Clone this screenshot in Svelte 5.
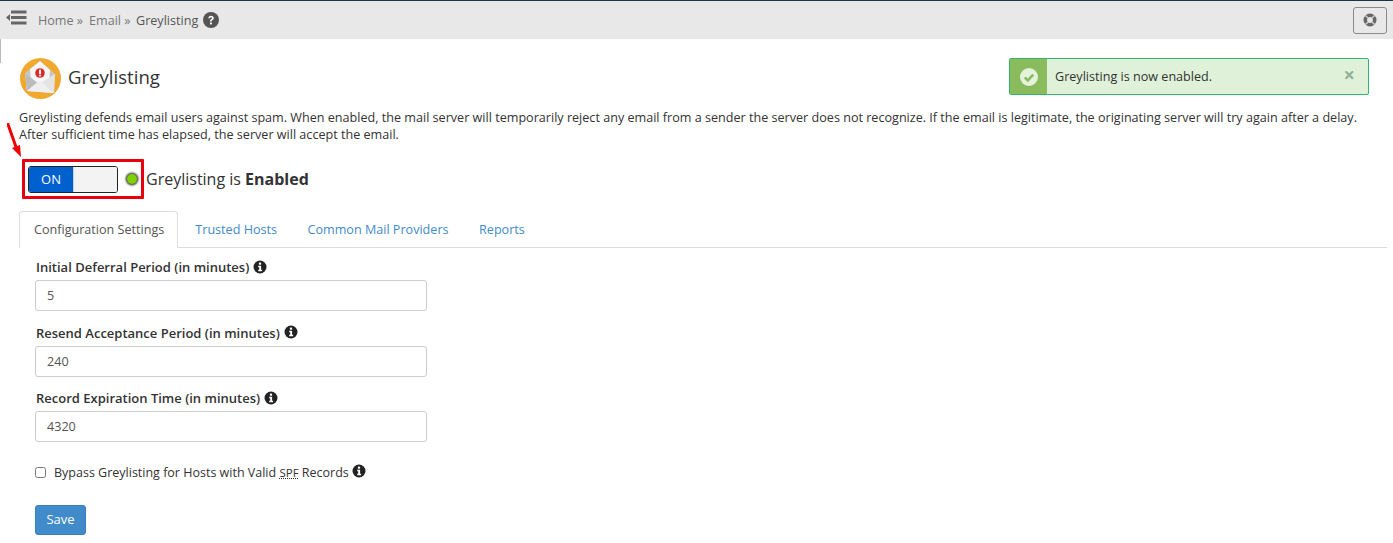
<script>
  let bypass = $state(false);
  const fields = [
    { label: 'Initial Deferral Period (in minutes)', value: '5' },
    { label: 'Resend Acceptance Period (in minutes)', value: '240' },
    { label: 'Record Expiration Time (in minutes)', value: '4320' }
  ];
  const tabs = ['Trusted Hosts', 'Common Mail Providers', 'Reports'];
</script>

{#snippet info()}
  <svg class="info" viewBox="0 0 14 14" aria-hidden="true">
    <circle cx="7" cy="7" r="6.5" fill="#222" />
    <rect x="5.9" y="2.6" width="2.2" height="2.1" fill="#fff" />
    <path d="M5.2 5.800h2.900v4h1v1.500H5.200V9.800h1V7.300h-1z" fill="#fff" />
  </svg>
{/snippet}

<div class="page">
  <header class="topbar">
    <div class="crumbs">
      <svg class="menu" viewBox="0 0 21 15" aria-hidden="true">
        <path d="M0 7.500 4 4v7z" fill="#666" />
        <rect x="5" y="0.500" width="15.500" height="3" fill="#666" />
        <rect x="5" y="6" width="15.500" height="3" fill="#666" />
        <rect x="5" y="11.500" width="15.500" height="3" fill="#666" />
      </svg>
      <span class="crumb home">Home »</span>
      <span class="crumb email">Email »</span>
      <span class="current">Greylisting</span>
      <svg class="help" viewBox="0 0 16 16" aria-hidden="true">
        <circle cx="8" cy="8" r="8" fill="#555" />
        <path d="M5.300 6.200C5.400 4.600 6.500 3.700 8.100 3.700c1.600 0 2.700 1 2.700 2.300 0 1.100-.6 1.600-1.300 2.100-.6.4-.8.700-.8 1.300H7c0-1.100.3-1.700 1.100-2.200.6-.4.9-.7.9-1.200 0-.5-.4-.8-.9-.8-.6 0-1 .4-1.100 1z" fill="#fff" />
        <rect x="7" y="10.500" width="1.900" height="1.900" fill="#fff" />
      </svg>
    </div>
    <button class="support" aria-label="Support">
      <svg viewBox="0 0 14 14" aria-hidden="true">
        <circle cx="7" cy="7" r="4.700" fill="none" stroke="#666" stroke-width="3.600" />
        <path d="M4.900 4.900 3.500 3.500 2.500 2.500M9.100 4.900l2.400-2.400M4.900 9.100l-2.400 2.400M9.100 9.100l2.400 2.400" stroke="#c9c9c9" stroke-width="1.500" />
      </svg>
    </button>
  </header>
  <div class="edge"></div>

  <main class="content">
    <div class="title-row">
      <div class="heading">
        <svg class="logo" viewBox="0 0 41 41" aria-hidden="true">
          <circle cx="20.500" cy="20.500" r="20.500" fill="#f0a92e" />
          <path d="M5 15 20 3 35 16 34 35 7 33z" fill="#c6c6c6" />
          <path d="M10 11 20 3 30 12 29 24 20 26 11 22z" fill="#f6f6f6" />
          <path d="M5 15 19 26 35 16 34 35 7 33z" fill="#e4e4e4" />
          <path d="M5 15 17 24.500 7 33z" fill="#bcbcbc" />
          <path d="M7 33 20 22.500 34 35z" fill="#efefef" />
          <circle cx="20" cy="15" r="4.800" fill="#d62c2c" />
          <rect x="19.100" y="11.600" width="1.800" height="4.400" fill="#fff" />
          <rect x="19.100" y="16.700" width="1.800" height="1.700" fill="#fff" />
        </svg>
        <h1>Greylisting</h1>
      </div>
      <div class="alert">
        <div class="alert-icon">
          <svg viewBox="0 0 18 18" aria-hidden="true">
            <circle cx="9" cy="9" r="9" fill="#e4f3dc" />
            <path d="M4.800 9.300 7.800 12.300 13.200 6.700" fill="none" stroke="#8abb5d" stroke-width="2.600" />
          </svg>
        </div>
        <span class="alert-text">Greylisting is now enabled.</span>
        <span class="close">×</span>
      </div>
    </div>

    <p class="desc">Greylisting defends email users against spam. When enabled, the mail server will temporarily reject any email from a sender the server does not recognize. If the email is legitimate, the originating server will try again after a delay. After sufficient time has elapsed, the server will accept the email.</p>

    <div class="status-wrap">
      <svg class="arrow" viewBox="0 0 16 36" aria-hidden="true">
        <path d="M0.500 0 9 24" stroke="#f00000" stroke-width="3" fill="none" />
        <path d="M5 25 13 22 14 34z" fill="#f00000" />
      </svg>
      <div class="status">
        <div class="highlight">
          <div class="toggle">
            <span class="on">ON</span>
            <span class="off"></span>
          </div>
          <span class="led"></span>
          <span class="status-text">Greylisting is <strong>Enabled</strong></span>
        </div>
      </div>
    </div>

    <nav class="tabs">
      <span class="tab active">Configuration Settings</span>
      {#each tabs as t}
        <span class="tab">{t}</span>
      {/each}
    </nav>

    <form class="form" onsubmit={(e) => e.preventDefault()}>
      {#each fields as f}
        <div class="field">
          <div class="label"><label for={f.label}>{f.label}</label> {@render info()}</div>
          <input id={f.label} value={f.value} />
        </div>
      {/each}
      <div class="check">
        <input id="bypass" type="checkbox" bind:checked={bypass} />
        <label for="bypass">Bypass Greylisting for Hosts with Valid <abbr>SPF</abbr> Records</label>
        {@render info()}
      </div>
      <button class="save" type="submit">Save</button>
    </form>
  </main>
</div>

<style>
  :global(body) {
    margin: 0;
    background: #fff;
    color: #333;
    font-family: "Open Sans", sans-serif;
    font-size: 12.6px;
    line-height: 17px;
  }
  .page {
    height: 543px;
    overflow: hidden;
    position: relative;
  }
  .topbar {
    box-sizing: border-box;
    height: 39px;
    background: #e8e8e8;
    border-top: 1px solid #1d3347;
    display: flex;
    align-items: center;
    justify-content: space-between;
    padding: 0 6px 0 6px;
  }
  .crumbs {
    display: flex;
    align-items: center;
  }
  .menu {
    width: 21px;
    height: 15px;
    margin: -5px 11px 0 0;
  }
  .crumb {
    color: #777;
  }
  .home {
    width: 51px;
  }
  .email {
    width: 47px;
  }
  .current {
    color: #555;
    width: 67px;
  }
  .help {
    width: 16px;
    height: 16px;
  }
  .support {
    box-sizing: border-box;
    width: 34px;
    height: 27px;
    padding: 0;
    background: #e8e8e8;
    border: 1px solid #8a8a8a;
    border-radius: 3px;
    display: flex;
    align-items: center;
    justify-content: center;
  }
  .support svg {
    width: 14px;
    height: 14px;
  }
  .edge {
    position: absolute;
    left: 0;
    top: 39px;
    width: 1px;
    height: 24px;
    background: #bbb;
  }
  .content {
    padding: 19px 6px 0 19px;
  }
  .title-row {
    display: flex;
    justify-content: space-between;
    align-items: flex-start;
    padding-right: 18px;
    height: 51px;
  }
  .heading {
    display: flex;
    align-items: center;
    gap: 7px;
    margin-left: 1px;
  }
  .logo {
    width: 41px;
    height: 41px;
  }
  h1 {
    margin: 0;
    padding-bottom: 3px;
    font-size: 18.6px;
    font-weight: 400;
    color: #333;
    line-height: 38px;
  }
  .alert {
    box-sizing: border-box;
    width: 360px;
    height: 37px;
    display: flex;
    align-items: center;
    background: #e0f1d9;
    border: 1px solid #2fb56d;
    border-radius: 2px;
    overflow: hidden;
  }
  .alert-icon {
    width: 37px;
    align-self: stretch;
    background: #8abb5d;
    display: flex;
    align-items: center;
    justify-content: center;
  }
  .alert-icon svg {
    width: 18px;
    height: 18px;
  }
  .alert-text {
    flex: 1;
    margin-left: 8px;
  }
  .close {
    color: #8db39a;
    font-size: 20px;
    font-weight: 700;
    margin: -4px 13px 0 0;
  }
  .desc {
    margin: 0 10px 0 0;
    line-height: 17px;
  }
  .status-wrap {
    position: relative;
  }
  .arrow {
    position: absolute;
    left: -12px;
    top: -20px;
    width: 16px;
    height: 36px;
  }
  .status {
    padding: 16px 0 12px 3px;
  }
  .highlight {
    box-sizing: border-box;
    width: 122px;
    height: 40px;
    border: 3px solid #e8000d;
    border-radius: 1px;
    display: flex;
    align-items: center;
    padding-left: 3px;
    white-space: nowrap;
  }
  .toggle {
    box-sizing: border-box;
    width: 90px;
    height: 27px;
    border: 1px solid #222;
    border-radius: 3px;
    display: flex;
    overflow: hidden;
    flex: none;
    font-size: 13px;
  }
  .on {
    width: 44px;
    background: #0060ce;
    color: #fff;
    text-align: center;
    line-height: 25px;
  }
  .off {
    flex: 1;
    background: #f3f3f3;
    border-left: 1px solid #cfcfcf;
  }
  .led {
    flex: none;
    width: 10px;
    height: 10px;
    margin-left: 9px;
    border-radius: 50%;
    background: #7ed000;
    box-shadow: 0 0 2px 1.500px #4a4f44;
  }
  .status-text {
    font-size: 16px;
    margin-left: 9px;
  }
  .tabs {
    display: flex;
    height: 37px;
    box-sizing: border-box;
    border-bottom: 1px solid #ddd;
  }
  .tab {
    box-sizing: border-box;
    height: 36px;
    padding: 9px 12.5px 0 16px;
    color: #428bca;
    border: 1px solid transparent;
  }
  .tab.active {
    height: 37px;
    padding: 9px 13px 0 14px;
    color: #555;
    background: #fff;
    border-color: #ddd #ddd #fff;
    border-radius: 4px 4px 0 0;
  }
  .form {
    padding: 11px 0 0 16px;
  }
  .field {
    margin-bottom: 13.5px;
  }
  .label {
    display: flex;
    align-items: center;
    gap: 4px;
    font-size: 13px;
    font-weight: 600;
    height: 17px;
    margin: 0 0 4px 1px;
  }
  .field input {
    display: block;
    box-sizing: border-box;
    width: 392px;
    height: 31px;
    padding: 0 11px;
    border: 1px solid #ccc;
    border-radius: 3px;
    font: inherit;
    color: #555;
    outline: none;
  }
  .info {
    width: 14px;
    height: 14px;
    flex: none;
    margin-top: -2px;
  }
  .check {
    display: flex;
    align-items: center;
    margin-top: 21.5px;
    gap: 3px;
    height: 17px;
    font-size: 12.5px;
  }
  .check input {
    width: 11px;
    height: 11px;
    margin: 0 5px 0 0;
  }
  abbr {
    text-decoration: underline dotted;
    font-size: 11.5px;
  }
  .save {
    display: block;
    box-sizing: border-box;
    width: 51px;
    height: 30px;
    margin-top: 24px;
    padding: 0;
    background: #428bca;
    border: 1px solid #3b7fba;
    border-radius: 3px;
    color: #fff;
    font: inherit;
    font-size: 13px;
  }
</style>
